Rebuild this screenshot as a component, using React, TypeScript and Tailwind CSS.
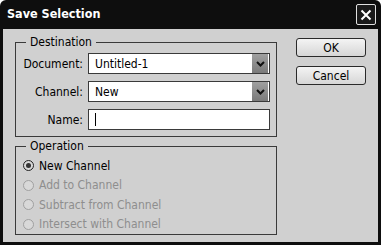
import React from "react";

const font = { fontFamily: '"DejaVu Sans Condensed", "DejaVu Sans", sans-serif' };

function Chevron() {
  return (
    <svg width="9" height="6" viewBox="0 0 9 6">
      <path d="M1 1 L4.5 4.5 L8 1" stroke="#111" strokeWidth="2" fill="none" />
    </svg>
  );
}

function Select({ value }: { value: string }) {
  return (
    <div className="flex h-[21px] w-[182px] items-center border border-[#3a3a3a] bg-white pl-[6px] pr-[1px]">
      <span className="flex-1 text-[12px] leading-none text-black">{value}</span>
      <div className="flex h-[19px] w-[16px] items-center justify-center bg-gradient-to-b from-[#a0a0a0] to-[#7a7a7a]">
        <Chevron />
      </div>
    </div>
  );
}

function Row({ label, children }: { label: string; children: React.ReactNode }) {
  return (
    <div className="flex items-center">
      <div className="w-[72px] pr-[5px] text-right text-[12px] text-black">{label}</div>
      {children}
    </div>
  );
}

function Radio({ label, checked, disabled }: { label: string; checked?: boolean; disabled?: boolean }) {
  return (
    <div className="flex h-[19.5px] items-center">
      <div
        className={
          "flex h-[11px] w-[11px] items-center justify-center rounded-full border bg-[#d8d8d8] " +
          (disabled ? "border-[#a0a0a0]" : "border-[#222]")
        }
      >
        {checked && <div className="h-[5px] w-[5px] rounded-full bg-[#333]" />}
      </div>
      <span className={"ml-[5px] text-[12px] " + (disabled ? "text-[#8e8e8e]" : "text-black")}>{label}</span>
    </div>
  );
}

function Button({ label }: { label: string }) {
  return (
    <div className="flex h-[19px] w-[70px] items-center justify-center rounded-[3px] border border-[#2a2a2a] bg-gradient-to-b from-[#f4f4f4] to-[#d6d6d6] text-[12px] text-black">
      {label}
    </div>
  );
}

export default function App() {
  return (
    <div style={font} className="flex h-[245px] w-[381px] flex-col rounded-t-[6px] bg-[#0e0e0e]">
      <div className="flex h-[29px] items-center justify-between pl-[7px] pr-[5px]">
        <span className="text-[12.5px] font-bold text-white">Save Selection</span>
        <div className="flex h-[21px] w-[20px] items-center justify-center rounded-[2px] border border-[#e0e0e0] bg-[#1a1a1a]">
          <svg width="12" height="12" viewBox="0 0 12 12">
            <path d="M1.5 1.5 L10.5 10.5 M10.5 1.5 L1.5 10.5" stroke="#fff" strokeWidth="2" />
          </svg>
        </div>
      </div>
      <div className="mx-[3px] mb-[3px] flex flex-1 bg-[#d0d0d0] pl-[12px] pt-[4px]">
        <div className="flex w-[262px] flex-col">
          <fieldset className="h-[104px] border border-[#3a3a3a] px-0 pt-0">
            <legend className="ml-[10px] px-[4px] text-[12px] text-black">Destination</legend>
            <div className="mt-[2px] flex flex-col gap-[7px]">
              <Row label="Document:">
                <Select value="Untitled-1" />
              </Row>
              <Row label="Channel:">
                <Select value="New" />
              </Row>
              <Row label="Name:">
                <div className="flex h-[21px] w-[182px] items-center border border-[#3a3a3a] bg-white pl-[6px]">
                  <div className="h-[13px] w-[1px] bg-black" />
                </div>
              </Row>
            </div>
          </fieldset>
          <fieldset className="h-[98px] border border-[#3a3a3a] pl-[7px]">
            <legend className="ml-[3px] px-[4px] text-[12px] text-black">Operation</legend>
            <div className="mt-[1px] flex flex-col">
              <Radio label="New Channel" checked />
              <Radio label="Add to Channel" disabled />
              <Radio label="Subtract from Channel" disabled />
              <Radio label="Intersect with Channel" disabled />
            </div>
          </fieldset>
        </div>
        <div className="ml-[19px] mt-[5px] flex flex-col gap-[9px]">
          <Button label="OK" />
          <Button label="Cancel" />
        </div>
      </div>
    </div>
  );
}
